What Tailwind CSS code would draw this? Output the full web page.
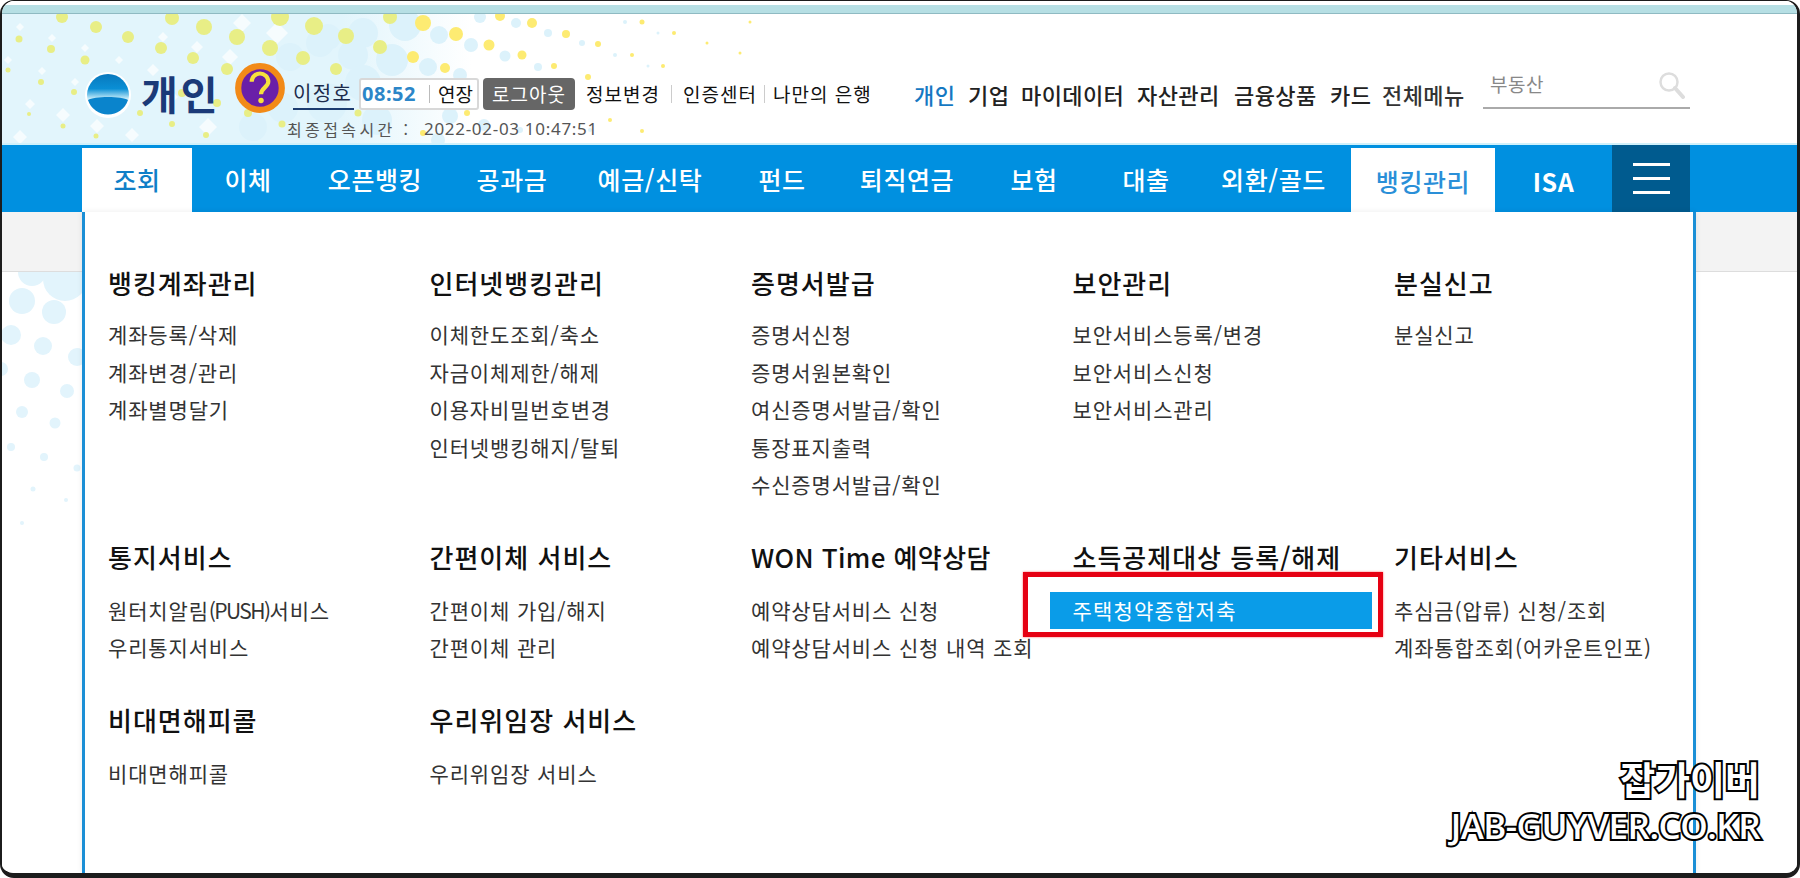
<!DOCTYPE html>
<html lang="ko">
<head>
<meta charset="utf-8">
<title>뱅킹관리</title>
<script src="https://cdn.jsdelivr.net/npm/@tailwindcss/browser@4"></script>
</head>
<body class="bg-white">
<div class="relative w-[1800px] h-[878px] overflow-hidden bg-white font-['Noto_Sans_CJK_KR','Noto_Sans',sans-serif]">
  <div class="w-full h-full flex flex-col overflow-hidden bg-white rounded-[14px] border-t border-l-2 border-r-[3px] border-b-[5px] border-[#1c1c1c]">
    <div class="h-[4px] shrink-0 bg-white"></div>
    <div class="h-[9px] shrink-0 bg-[#b6dfe4] border-b border-[#8fbac2]"></div>

    <!-- header -->
    <div class="relative flex items-start h-[131px] shrink-0 bg-[linear-gradient(90deg,#e2f5fc_0,#e2f5fc_340px,#ffffff_470px)] border-b-2 border-[#d0f1fb]">
      <svg class="absolute left-0 top-0" width="800" height="129" viewBox="0 0 800 129" aria-hidden="true">
        <g transform="translate(-2,-14)">
          <g fill="#f6fcfe">
            <path d="M20 23l4 4-4 4-4-4zM52 34l4 4-4 4-4-4zM85 44l4 4-4 4-4-4zM8 56l4 4-4 4-4-4zM42 67l4 4-4 4-4-4zM75 78l4 4-4 4-4-4zM119 56l4 4-4 4-4-4zM163 32l5 5-5 5-5-5zM197 41l6 6-6 6-6-6zM230 49l8 8-8 8-8-8zM242 14l9 9-9 9-9-9zM277 22l11 11-11 11-11-11zM30 99l5 5-5 5-5-5zM63 108l7 7-7 7-7-7zM97 119l7 7-7 7-7-7zM132 128l7 7-7 7-7-7zM20 130l7 7-7 7-7-7zM208 118l9 9-9 9-9-9zM153 64l6 6-6 6-6-6zM173 92l5 5-5 5-5-5z"/>
          </g>
          <g fill="#dcf2fb">
            <circle cx="328" cy="37" r="13"/><circle cx="363" cy="33" r="15"/><circle cx="290" cy="57" r="14"/><circle cx="320" cy="43" r="14"/><circle cx="353" cy="55" r="15"/><circle cx="392" cy="60" r="16"/><circle cx="253" cy="127" r="14"/><circle cx="283" cy="108" r="15"/><circle cx="327" cy="103" r="20"/><circle cx="363" cy="83" r="18"/><circle cx="377" cy="120" r="15"/><circle cx="405" cy="25" r="16"/><circle cx="439" cy="35" r="9"/><circle cx="471" cy="45" r="7"/><circle cx="505" cy="56" r="5.5"/><circle cx="538" cy="67" r="4"/><circle cx="428" cy="67" r="9"/><circle cx="516" cy="23" r="5"/><circle cx="548" cy="33" r="4"/><circle cx="582" cy="43" r="3"/><circle cx="615" cy="55" r="2"/><circle cx="648" cy="66" r="1.5"/><circle cx="625" cy="22" r="2"/><circle cx="658" cy="33" r="1.5"/><circle cx="460" cy="75" r="7"/><circle cx="480" cy="17" r="6"/><circle cx="450" cy="116" r="8"/><circle cx="484" cy="125" r="6"/><circle cx="438" cy="140" r="7"/><circle cx="520" cy="130" r="3"/><circle cx="590" cy="130" r="2"/>
          </g>
          <g fill="#e8ee86">
            <circle cx="62" cy="17" r="6"/><circle cx="96" cy="27" r="6"/><circle cx="128" cy="37" r="6"/><circle cx="161" cy="48" r="6"/><circle cx="193" cy="58" r="6"/><circle cx="227" cy="69" r="6"/><circle cx="172" cy="18" r="7"/><circle cx="204" cy="27" r="8"/><circle cx="237" cy="37" r="8"/><circle cx="270" cy="48" r="8"/><circle cx="303" cy="58" r="7"/><circle cx="336" cy="69" r="6"/><circle cx="280" cy="17" r="9"/><circle cx="314" cy="26" r="9"/><circle cx="346" cy="36" r="8"/><circle cx="380" cy="47" r="7"/><circle cx="390" cy="17" r="7"/>
            <circle cx="19" cy="39" r="3.5"/><circle cx="51" cy="49" r="4"/><circle cx="85" cy="60" r="4.5"/><circle cx="8" cy="70" r="2.5"/><circle cx="41" cy="82" r="3"/><circle cx="74" cy="92" r="3"/><circle cx="29" cy="114" r="2"/><circle cx="63" cy="126" r="2.5"/><circle cx="96" cy="136" r="2.5"/><circle cx="140" cy="113" r="3"/><circle cx="172" cy="124" r="3"/><circle cx="206" cy="135" r="3"/><circle cx="182" cy="93" r="4"/><circle cx="217" cy="103" r="4"/><circle cx="248" cy="113" r="4"/><circle cx="282" cy="124" r="3.5"/><circle cx="358" cy="113" r="3.5"/>
          </g>
          <g fill="#fdeb72">
            <circle cx="423" cy="23" r="8"/><circle cx="456" cy="34" r="7"/><circle cx="489" cy="45" r="5.5"/><circle cx="522" cy="55" r="4.5"/><circle cx="554" cy="66" r="3"/><circle cx="413" cy="57" r="6"/><circle cx="445" cy="68" r="5"/><circle cx="500" cy="16" r="5"/><circle cx="532" cy="23" r="5"/><circle cx="566" cy="34" r="4"/><circle cx="598" cy="44" r="3"/><circle cx="632" cy="55" r="2"/><circle cx="663" cy="66" r="2"/><circle cx="642" cy="22" r="2.5"/><circle cx="674" cy="33" r="2"/><circle cx="707" cy="43" r="1.5"/><circle cx="740" cy="53" r="1.5"/><circle cx="750" cy="22" r="1.5"/><circle cx="588" cy="77" r="3"/><circle cx="467" cy="113" r="3"/><circle cx="423" cy="133" r="3"/><circle cx="610" cy="120" r="2"/><circle cx="642" cy="131" r="2"/>
          </g>
        </g>
      </svg>

      <!-- logo -->
      <svg class="relative ml-[83px] mt-[58px] shrink-0" width="46" height="46" viewBox="0 0 46 46" role="img" aria-label="우리은행 로고">
        <defs>
          <linearGradient id="lg" x1="0" y1="0" x2="0" y2="1">
            <stop offset="0" stop-color="#0878bd"/><stop offset="0.35" stop-color="#0a8fd5"/><stop offset="0.58" stop-color="#bfe8f7"/><stop offset="0.66" stop-color="#ffffff"/><stop offset="1" stop-color="#ffffff"/>
          </linearGradient>
        </defs>
        <circle cx="23" cy="23" r="23" fill="#ffffff"/>
        <circle cx="23" cy="23" r="21" fill="url(#lg)"/>
        <path d="M3 28c6-4 34-4 40 0A21 21 0 0 1 3 28z" fill="#0a84cc"/>
      </svg>
      <div class="relative ml-[10px] mt-[49px] w-[78px] text-[40px] leading-[60px] font-bold tracking-[3px] text-[#1b3a78] whitespace-nowrap">개인</div>
      <svg class="relative ml-[14px] mt-[47px] shrink-0" width="54" height="54" viewBox="0 0 52 52" aria-hidden="true">
        <circle cx="26" cy="26" r="21" fill="#6a1fa8" stroke="#f28a18" stroke-width="6"/>
        <path d="M18 20c0-5 4-8 8-8s8 3 8 8c0 5-7 6-7 12" fill="none" stroke="#f6e13c" stroke-width="4"/>
        <circle cx="27" cy="38" r="2.6" fill="#f6e13c"/>
      </svg>

      <div class="relative ml-[6px] mt-[64px] flex flex-col">
        <div class="flex items-center h-[32px]">
          <div class="w-[61px] text-[20px] leading-[30px] tracking-[1.4px] text-[#1c2c4c] border-b-2 border-[#1c3c70] whitespace-nowrap">이정호</div>
          <div class="ml-[5px] w-[120px] h-[32px] flex items-center rounded-[3px] bg-white border-2 border-[#d8d8d8]">
            <span class="w-[68px] pl-[1px] text-[20px] font-bold text-[#2c86c8] font-['Noto_Sans',sans-serif] tracking-[0.5px]">08:52</span>
            <span class="w-px h-[18px] bg-[#bbbbbb]"></span>
            <span class="ml-[8px] text-[19px] text-[#111111] whitespace-nowrap">연장</span>
          </div>
          <div class="ml-[4px] w-[92px] h-[32px] flex items-center justify-center rounded-[4px] bg-[#666666] text-white text-[19px] tracking-[1px] whitespace-nowrap">로그아웃</div>
          <div class="ml-[11px] flex items-center text-[19px] tracking-[1px] text-[#111111] whitespace-nowrap">
            <span class="w-[74px]">정보변경</span>
            <span class="mx-[11px] w-px h-[18px] bg-[#cccccc]"></span>
            <span class="w-[73px]">인증센터</span>
            <span class="mx-[8px] w-px h-[18px] bg-[#cccccc]"></span>
            <span>나만의 은행</span>
          </div>
        </div>
        <div class="flex items-center -ml-[6px] mt-[8px] h-[22px] text-[16px] text-[#555555] whitespace-nowrap">
          <span class="tracking-[3.4px] w-[137px]">최종접속시간 :</span>
          <span class="text-[17px] tracking-[0.7px] font-['Noto_Sans',sans-serif]">2022-02-03 10:47:51</span>
        </div>
      </div>

      <div class="relative ml-auto mr-[107px] mt-[64px] flex items-start">
        <div class="flex items-center h-[32px] text-[22px] tracking-[0.4px] font-medium text-[#222222] whitespace-nowrap">
          <span class="w-[54px] text-[#1578c2]">개인</span>
          <span class="w-[53px]">기업</span>
          <span class="w-[116px]">마이데이터</span>
          <span class="w-[97px]">자산관리</span>
          <span class="w-[96px]">금융상품</span>
          <span class="w-[52px]">카드</span>
          <span class="w-[101px] text-[#333333]">전체메뉴</span>
        </div>
        <div class="flex items-center justify-between w-[207px] h-[47px] -mt-[16px] pl-[7px] pr-[4px] border-b-2 border-[#aaaaaa]">
          <span class="text-[19px] tracking-[0.5px] text-[#888888]">부동산</span>
          <svg width="28" height="28" viewBox="0 0 28 28" fill="none" stroke="#dddddd" aria-hidden="true">
            <circle cx="11" cy="11" r="8.5" stroke-width="2.5"/>
            <path d="M17 17l8 9" stroke-width="4" stroke-linecap="round"/>
          </svg>
        </div>
      </div>
    </div>

    <!-- nav -->
    <div class="flex items-end h-[67px] shrink-0 pl-[80px] bg-[#0090e0] text-white text-[25px] tracking-[0.6px] font-medium whitespace-nowrap">
      <div class="w-[110px] h-[64px] flex items-center justify-center bg-white text-[#0f7fc8]">조회</div>
      <div class="w-[112px] h-[64px] flex items-center justify-center">이체</div>
      <div class="w-[142px] h-[64px] flex items-center justify-center">오픈뱅킹</div>
      <div class="w-[132px] h-[64px] flex items-center justify-center">공과금</div>
      <div class="w-[144px] h-[64px] flex items-center justify-center">예금/신탁</div>
      <div class="w-[120px] h-[64px] flex items-center justify-center">펀드</div>
      <div class="w-[130px] h-[64px] flex items-center justify-center">퇴직연금</div>
      <div class="w-[124px] h-[64px] flex items-center justify-center">보험</div>
      <div class="w-[100px] h-[64px] flex items-center justify-center">대출</div>
      <div class="w-[155px] h-[64px] flex items-center justify-center">외환/골드</div>
      <div class="w-[144px] h-[64px] flex items-center justify-center bg-white text-[#2a8fd8] pt-[3px]">뱅킹관리</div>
      <div class="w-[117px] h-[64px] flex items-center justify-center font-bold pt-[3px]">ISA</div>
      <div class="w-[78px] h-[67px] flex flex-col items-center justify-center gap-[11px] bg-[#005b8f]">
        <span class="w-[37px] h-[3px] bg-white"></span>
        <span class="w-[37px] h-[3px] bg-white"></span>
        <span class="w-[37px] h-[3px] bg-white"></span>
      </div>
    </div>

    <!-- body -->
    <div class="flex flex-1 min-h-0 bg-white">
      <div class="w-[80px] shrink-0 flex flex-col">
        <div class="h-[60px] shrink-0 bg-[#f3f3f3] border-b border-[#dddddd]"></div>
        <svg width="80" height="260" viewBox="0 0 80 260" fill="#e2f4fc" aria-hidden="true">
          <g transform="translate(-2,-272)">
            <circle cx="32" cy="272" r="14"/><circle cx="65" cy="279" r="22"/><circle cx="22" cy="301" r="13"/><circle cx="54" cy="312" r="12"/><circle cx="11" cy="335" r="10"/><circle cx="43" cy="346" r="9"/><circle cx="77" cy="357" r="9"/><circle cx="32" cy="380" r="8"/><circle cx="67" cy="391" r="7"/><circle cx="22" cy="412" r="6"/><circle cx="55" cy="423" r="5.5"/><circle cx="11" cy="447" r="4"/><circle cx="44" cy="457" r="4"/><circle cx="77" cy="468" r="3.5"/><circle cx="33" cy="489" r="2.5"/><circle cx="66" cy="500" r="2"/><circle cx="22" cy="523" r="2"/><circle cx="1" cy="369" r="7"/>
          </g>
        </svg>
      </div>

      <div class="relative z-10 w-[1614px] shrink-0 border-x-[3px] border-[#1b8fd6] bg-white shadow-[0_0_6px_rgba(0,0,0,0.08)] pt-[52px] pl-[23px] text-[21px] tracking-[0.85px] text-[#333333] whitespace-nowrap">
        <div class="grid grid-cols-[repeat(5,321.5px)] grid-rows-[274px_163px_auto]">
          <div>
            <h3 class="h-[36px] flex items-center mb-[16px] text-[26px] tracking-[1px] font-medium text-[#111111]">뱅킹계좌관리</h3>
            <p class="h-[37.5px] flex items-center">계좌등록/삭제</p>
            <p class="h-[37.5px] flex items-center">계좌변경/관리</p>
            <p class="h-[37.5px] flex items-center">계좌별명달기</p>
          </div>
          <div>
            <h3 class="h-[36px] flex items-center mb-[16px] text-[26px] tracking-[1px] font-medium text-[#111111]">인터넷뱅킹관리</h3>
            <p class="h-[37.5px] flex items-center">이체한도조회/축소</p>
            <p class="h-[37.5px] flex items-center">자금이체제한/해제</p>
            <p class="h-[37.5px] flex items-center">이용자비밀번호변경</p>
            <p class="h-[37.5px] flex items-center">인터넷뱅킹해지/탈퇴</p>
          </div>
          <div>
            <h3 class="h-[36px] flex items-center mb-[16px] text-[26px] tracking-[1px] font-medium text-[#111111]">증명서발급</h3>
            <p class="h-[37.5px] flex items-center">증명서신청</p>
            <p class="h-[37.5px] flex items-center">증명서원본확인</p>
            <p class="h-[37.5px] flex items-center">여신증명서발급/확인</p>
            <p class="h-[37.5px] flex items-center">통장표지출력</p>
            <p class="h-[37.5px] flex items-center">수신증명서발급/확인</p>
          </div>
          <div>
            <h3 class="h-[36px] flex items-center mb-[16px] text-[26px] tracking-[1px] font-medium text-[#111111]">보안관리</h3>
            <p class="h-[37.5px] flex items-center">보안서비스등록/변경</p>
            <p class="h-[37.5px] flex items-center">보안서비스신청</p>
            <p class="h-[37.5px] flex items-center">보안서비스관리</p>
          </div>
          <div>
            <h3 class="h-[36px] flex items-center mb-[16px] text-[26px] tracking-[1px] font-medium text-[#111111]">분실신고</h3>
            <p class="h-[37.5px] flex items-center">분실신고</p>
          </div>

          <div>
            <h3 class="h-[36px] flex items-center mb-[18px] text-[26px] tracking-[1px] font-medium text-[#111111]">통지서비스</h3>
            <p class="h-[37px] flex items-center">원터치알림<span class="tracking-[-1.6px]">(PUSH)</span>서비스</p>
            <p class="h-[37px] flex items-center">우리통지서비스</p>
          </div>
          <div>
            <h3 class="h-[36px] flex items-center mb-[18px] text-[26px] tracking-[1px] font-medium text-[#111111] whitespace-pre">간편이체 서비스</h3>
            <p class="h-[37px] flex items-center whitespace-pre">간편이체 가입/해지</p>
            <p class="h-[37px] flex items-center whitespace-pre">간편이체 관리</p>
          </div>
          <div>
            <h3 class="h-[36px] flex items-center mb-[18px] text-[26px] tracking-[0.4px] font-medium text-[#111111] whitespace-pre">WON Time 예약상담</h3>
            <p class="h-[37px] flex items-center whitespace-pre">예약상담서비스 신청</p>
            <p class="h-[37px] flex items-center whitespace-pre">예약상담서비스 신청 내역 조회</p>
          </div>
          <div>
            <h3 class="h-[36px] flex items-center mb-[18px] text-[26px] tracking-[1px] font-medium text-[#111111] whitespace-pre">소득공제대상 등록/해제</h3>
            <p class="relative h-[37px] w-[322px] -ml-[23px] pl-[23px] flex items-center bg-[#0a9ce8] text-white tracking-[1.2px]">주택청약종합저축
              <span class="absolute left-[-27px] top-[-20px] w-[360px] h-[65px] border-[5px] border-[#e60012] shadow-[0_0_2px_#ff6666]"></span>
            </p>
          </div>
          <div>
            <h3 class="h-[36px] flex items-center mb-[18px] text-[26px] tracking-[1px] font-medium text-[#111111]">기타서비스</h3>
            <p class="h-[37px] flex items-center whitespace-pre">추심금(압류) 신청/조회</p>
            <p class="h-[37px] flex items-center">계좌통합조회(어카운트인포)</p>
          </div>

          <div>
            <h3 class="h-[36px] flex items-center mb-[18px] text-[26px] tracking-[1px] font-medium text-[#111111]">비대면해피콜</h3>
            <p class="h-[37px] flex items-center">비대면해피콜</p>
          </div>
          <div>
            <h3 class="h-[36px] flex items-center mb-[18px] text-[26px] tracking-[1px] font-medium text-[#111111] whitespace-pre">우리위임장 서비스</h3>
            <p class="h-[37px] flex items-center whitespace-pre">우리위임장 서비스</p>
          </div>
        </div>
      </div>

      <div class="flex-1">
        <div class="h-[60px] bg-[#f3f3f3] border-b border-[#dddddd]"></div>
      </div>
    </div>
  </div>

  <!-- watermark -->
  <div class="absolute z-20 right-[40px] top-[754px] flex flex-col items-end text-white font-bold whitespace-nowrap [paint-order:stroke_fill] [-webkit-text-stroke:4px_#000000]">
    <span class="text-[38px] leading-[48px]">잡가이버</span>
    <span class="mt-[4px] text-[35px] leading-[40px] font-['Open_Sans',sans-serif] font-semibold tracking-[-0.5px]">JAB-GUYVER.CO.KR</span>
  </div>
</div>
</body>
</html>
